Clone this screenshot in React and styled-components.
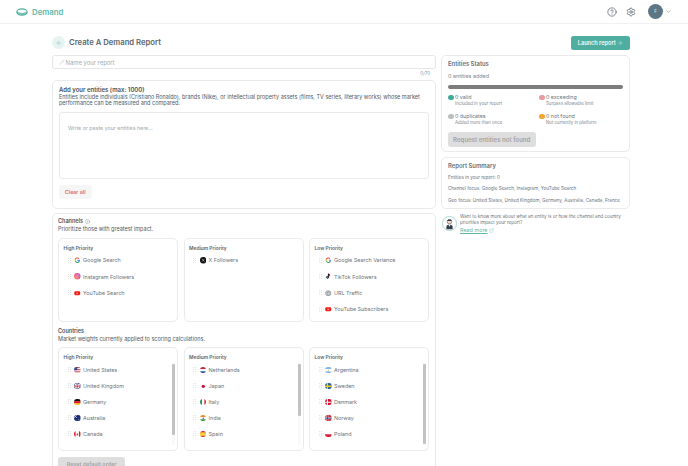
import React from "react";
import styled, { createGlobalStyle } from "styled-components";
import { ArrowLeft, ArrowRight, ChevronDown, CircleHelp, ExternalLink, Pencil, Settings, Info } from "lucide-react";

const palette = {
  text: "#4a5560",
  heading: "#5b6770",
  muted: "#8d959c",
  line: "#e8eaeb",
  teal: "#4fae9f",
  tealText: "#5db8aa",
  tealSoft: "#e6f3f0",
};

const GlobalStyle = createGlobalStyle`
  html, body { margin: 0; padding: 0; height: 100%; overflow: hidden; background: #fff; }
  body { font-family: Inter, "Liberation Sans", sans-serif; color: ${palette.text}; }
  * { box-sizing: border-box; }
`;

const GoogleIcon = ({ muted }) => (
  <IconSvg viewBox="0 0 24 24">
    <path fill="#4285F4" d="M22 12.2c0-.7-.1-1.4-.2-2H12v3.9h5.6a4.8 4.8 0 0 1-2.1 3.1v2.6h3.4c2-1.8 3.1-4.5 3.1-7.6z" />
    <path fill="#34A853" d="M12 22.5c2.8 0 5.2-.9 6.9-2.5l-3.4-2.6c-.9.6-2.1 1-3.5 1-2.7 0-5-1.8-5.8-4.3H3.2v2.7a10.5 10.5 0 0 0 8.8 5.7z" />
    <path fill="#FBBC05" d="M6.2 14.1a6.3 6.3 0 0 1 0-4.2V7.2H3.2a10.5 10.5 0 0 0 0 9.6z" />
    <path fill="#EA4335" d="M12 5.7c1.5 0 2.9.5 4 1.5l3-3A10.5 10.5 0 0 0 3.2 7.2l3 2.7c.8-2.4 3.1-4.2 5.8-4.2z" />
    {muted && <circle cx="12" cy="12" r="3.6" fill="#fff" />}
  </IconSvg>
);

const InstagramIcon = () => (
  <IconSvg viewBox="0 0 24 24">
    <defs>
      <linearGradient id="ig" x1="0" y1="1" x2="1" y2="0">
        <stop offset="0" stopColor="#f9a03f" />
        <stop offset="0.5" stopColor="#e8508f" />
        <stop offset="1" stopColor="#b45bd0" />
      </linearGradient>
    </defs>
    <circle cx="12" cy="12" r="12" fill="url(#ig)" />
    <rect x="6" y="6" width="12" height="12" rx="3.5" fill="none" stroke="#fff" strokeOpacity=".6" strokeWidth="1.5" />
    <circle cx="12" cy="12" r="3" fill="none" stroke="#fff" strokeOpacity=".6" strokeWidth="1.5" />
  </IconSvg>
);

const YoutubeIcon = () => (
  <IconSvg viewBox="0 0 24 24">
    <rect x="1" y="5" width="22" height="14" rx="4" fill="#f01f17" />
    <path d="M10 9l5.5 3-5.5 3z" fill="#fff" />
  </IconSvg>
);

const XIcon = () => (
  <IconSvg viewBox="0 0 24 24">
    <circle cx="12" cy="12" r="12" fill="#111" />
    <path d="M7 6.5l10 11M17 6.5l-10 11" stroke="#fff" strokeWidth="1.7" />
  </IconSvg>
);

const TiktokIcon = () => (
  <IconSvg viewBox="0 0 24 24">
    <path d="M13 3v12.5a3.4 3.4 0 1 1-3.4-3.4M13 3c.4 3 2.4 5 5.5 5.2" fill="none" stroke="#25f4ee" strokeWidth="3.2" transform="translate(-1 .6)" />
    <path d="M13 3v12.5a3.4 3.4 0 1 1-3.4-3.4M13 3c.4 3 2.4 5 5.5 5.2" fill="none" stroke="#fe2c55" strokeWidth="3.2" transform="translate(1 -.2)" />
    <path d="M13 3v12.5a3.4 3.4 0 1 1-3.4-3.4M13 3c.4 3 2.4 5 5.5 5.2" fill="none" stroke="#111" strokeWidth="3" />
  </IconSvg>
);

const GlobeIcon = () => (
  <IconSvg viewBox="0 0 24 24">
    <circle cx="12" cy="12" r="9.5" fill="none" stroke="#7c8589" strokeWidth="2.6" />
    <path d="M3 9h18M3 15h18M12 3c-5 5-5 13 0 18M12 3c5 5 5 13 0 18" fill="none" stroke="#7c8589" strokeWidth="2" />
  </IconSvg>
);

const stripes = (colors, vertical) =>
  colors.map((c, i) =>
    vertical ? (
      <rect key={i} x={(i * 24) / colors.length} y="0" width={24 / colors.length} height="24" fill={c} />
    ) : (
      <rect key={i} x="0" y={(i * 24) / colors.length} width="24" height={24 / colors.length} fill={c} />
    )
  );

const flags = {
  us: (
    <>
      {stripes(["#c9404f", "#f3dfe1", "#c9404f", "#f3dfe1", "#c9404f", "#f3dfe1"])}
      <rect width="12" height="12" fill="#3c4a8a" />
    </>
  ),
  uk: (
    <>
      <rect width="24" height="24" fill="#2b3f87" />
      <path d="M0 0l24 24M24 0L0 24" stroke="#fff" strokeWidth="4" />
      <path d="M12 0v24M0 12h24" stroke="#fff" strokeWidth="6" />
      <path d="M12 0v24M0 12h24" stroke="#d0263a" strokeWidth="3" />
    </>
  ),
  de: stripes(["#111", "#d8121f", "#f7b90e"]),
  au: (
    <>
      <rect width="24" height="24" fill="#1c2f78" />
      <path d="M0 0l11 11M11 0L0 11" stroke="#e6e6ee" strokeWidth="2.5" />
      <circle cx="17" cy="16" r="1.6" fill="#fff" />
    </>
  ),
  ca: (
    <>
      <rect width="24" height="24" fill="#fff" />
      <rect width="6" height="24" fill="#e0222f" />
      <rect x="18" width="6" height="24" fill="#e0222f" />
      <path d="M12 7l3 6-1 .5V17h-4v-3.5L9 13z" fill="#e0222f" />
    </>
  ),
  nl: stripes(["#c8283a", "#fff", "#24408e"]),
  jp: (
    <>
      <rect width="24" height="24" fill="#fff" />
      <circle cx="12" cy="12" r="6" fill="#d01030" />
    </>
  ),
  it: stripes(["#1f9a55", "#fff", "#d9303c"], true),
  in: (
    <>
      {stripes(["#f28a30", "#fff", "#1f8a3f"])}
      <circle cx="12" cy="12" r="2.5" fill="#2b3f87" />
    </>
  ),
  es: stripes(["#d9262e", "#fbc31c", "#fbc31c", "#d9262e"]),
  ar: (
    <>
      {stripes(["#7db8e8", "#fff", "#7db8e8"])}
      <circle cx="12" cy="12" r="2.5" fill="#f6c343" />
    </>
  ),
  se: (
    <>
      <rect width="24" height="24" fill="#1b5fa8" />
      <path d="M9 0v24M0 12h24" stroke="#fccb16" strokeWidth="5" />
    </>
  ),
  dk: (
    <>
      <rect width="24" height="24" fill="#d3122e" />
      <path d="M9 0v24M0 12h24" stroke="#fff" strokeWidth="4" />
    </>
  ),
  no: (
    <>
      <rect width="24" height="24" fill="#c8283a" />
      <path d="M9 0v24M0 12h24" stroke="#fff" strokeWidth="6" />
      <path d="M9 0v24M0 12h24" stroke="#24408e" strokeWidth="3" />
    </>
  ),
  pl: stripes(["#fff", "#dc1c3a"]),
};

const Flag = ({ code }) => <FlagSvg viewBox="0 0 24 24">{flags[code]}</FlagSvg>;

const channelGroups = [
  {
    title: "High Priority",
    items: [
      { name: "Google Search", icon: <GoogleIcon /> },
      { name: "Instagram Followers", icon: <InstagramIcon /> },
      { name: "YouTube Search", icon: <YoutubeIcon /> },
    ],
  },
  { title: "Medium Priority", items: [{ name: "X Followers", icon: <XIcon /> }] },
  {
    title: "Low Priority",
    items: [
      { name: "Google Search Variance", icon: <GoogleIcon muted /> },
      { name: "TikTok Followers", icon: <TiktokIcon /> },
      { name: "URL Traffic", icon: <GlobeIcon /> },
      { name: "YouTube Subscribers", icon: <YoutubeIcon /> },
    ],
  },
];

const countryGroups = [
  {
    title: "High Priority",
    thumb: 71,
    items: [
      ["United States", "us"],
      ["United Kingdom", "uk"],
      ["Germany", "de"],
      ["Australia", "au"],
      ["Canada", "ca"],
    ],
  },
  {
    title: "Medium Priority",
    thumb: 52,
    items: [
      ["Netherlands", "nl"],
      ["Japan", "jp"],
      ["Italy", "it"],
      ["India", "in"],
      ["Spain", "es"],
    ],
  },
  {
    title: "Low Priority",
    thumb: 80,
    items: [
      ["Argentina", "ar"],
      ["Sweden", "se"],
      ["Denmark", "dk"],
      ["Norway", "no"],
      ["Poland", "pl"],
    ],
  },
];

const statuses = [
  { color: "#45aa9b", label: "0 valid", note: "Included in your report" },
  { color: "#e79aa0", label: "0 exceeding", note: "Surpass allowable limit" },
  { color: "#bdbdbd", label: "0 duplicates", note: "Added more than once" },
  { color: "#f3a52f", label: "0 not found", note: "Not currently in platform" },
];

const Grip = () => (
  <GripSvg viewBox="0 0 4 6">
    {[0.6, 3].map((x) => [0.6, 3, 5.4].map((y) => <circle key={`${x}-${y}`} cx={x} cy={y} r="0.55" />))}
  </GripSvg>
);

export default function App() {
  return (
    <>
      <GlobalStyle />
      <Page>
        <TopBar>
          <Brand>
            <LogoMark viewBox="0 0 24 16">
              <ellipse cx="12" cy="8" rx="11.5" ry="7.5" fill="#4fae9f" />
              <ellipse cx="12" cy="6.5" rx="9" ry="3.4" fill="#fff" />
              <path d="M5 11c4 1.5 10 1.5 14 0" stroke="#bfe3dc" strokeWidth="1.2" fill="none" />
            </LogoMark>
            <BrandName>Demand</BrandName>
          </Brand>
          <TopActions>
            <TopIcon><CircleHelp size={10} strokeWidth={1.6} /></TopIcon>
            <TopIcon><Settings size={10} strokeWidth={1.6} /></TopIcon>
            <UserMenu>
              <Avatar>F</Avatar>
              <ChevronDown size={7} strokeWidth={1.5} />
            </UserMenu>
          </TopActions>
        </TopBar>

        <Content>
          <TitleRow>
            <TitleLeft>
              <BackButton><ArrowLeft size={6} strokeWidth={1.5} /></BackButton>
              <PageTitle>Create A Demand Report</PageTitle>
            </TitleLeft>
            <LaunchButton>
              Launch report <ArrowRight size={6} strokeWidth={1.5} />
            </LaunchButton>
          </TitleRow>

          <Columns>
            <MainColumn>
              <NameInput>
                <Pencil size={5} strokeWidth={1.2} />
                <span>Name your report</span>
              </NameInput>
              <Counter>0/70</Counter>

              <Card>
                <CardTitle>Add your entities (max: 1000)</CardTitle>
                <BodyText>
                  Entities include individuals (Cristiano Ronaldo), brands (Nike), or intellectual property assets (films, TV series, literary works) whose market performance can be measured and compared.
                </BodyText>
                <TextBox>Write or paste your entities here...</TextBox>
                <ClearButton>Clear all</ClearButton>
              </Card>

              <ChannelCard>
                <SectionTitle>Channels <Info size={5} strokeWidth={1.3} /></SectionTitle>
                <BodyText>Prioritize those with greatest impact.</BodyText>
                <BoxGrid>
                  {channelGroups.map((group) => (
                    <Box key={group.title} $height="84px">
                      <BoxTitle>{group.title}</BoxTitle>
                      <List>
                        {group.items.map((item) => (
                          <Row key={item.name} $tall>
                            <Grip />
                            {item.icon}
                            <span>{item.name}</span>
                          </Row>
                        ))}
                      </List>
                    </Box>
                  ))}
                </BoxGrid>

                <CountrySection>
                  <SectionTitle>Countries</SectionTitle>
                  <BodyText>Market weights currently applied to scoring calculations.</BodyText>
                </CountrySection>
                <BoxGrid>
                  {countryGroups.map((group) => (
                    <Box key={group.title} $height="104px">
                      <BoxTitle>{group.title}</BoxTitle>
                      <List>
                        {group.items.map(([name, code]) => (
                          <Row key={name}>
                            <Grip />
                            <Flag code={code} />
                            <span>{name}</span>
                          </Row>
                        ))}
                      </List>
                      <ScrollTrack>
                        <ScrollThumb style={{ height: group.thumb }} />
                      </ScrollTrack>
                    </Box>
                  ))}
                </BoxGrid>
                <ResetButton>Reset default order</ResetButton>
              </ChannelCard>
            </MainColumn>

            <SideColumn>
              <StatusCard>
                <SideTitle>Entities Status</SideTitle>
                <SmallLine>0 entities added</SmallLine>
                <ProgressBar />
                <StatusGrid>
                  {statuses.map((s) => (
                    <StatusItem key={s.label}>
                      <Dot $color={s.color} />
                      <div>
                        <StatusLabel>{s.label}</StatusLabel>
                        <StatusNote>{s.note}</StatusNote>
                      </div>
                    </StatusItem>
                  ))}
                </StatusGrid>
                <RequestButton>Request entities not found</RequestButton>
              </StatusCard>

              <SummaryCard>
                <SideTitle>Report Summary</SideTitle>
                <SummaryLine>Entities in your report: 0</SummaryLine>
                <SummaryLine>Channel focus: Google Search, Instagram, YouTube Search</SummaryLine>
                <SummaryLine>Geo focus: United States, United Kingdom, Germany, Australia, Canada, France</SummaryLine>
              </SummaryCard>

              <HelpRow>
                <HelpAvatar>
                  <svg viewBox="0 0 24 24" width="15" height="15">
                    <circle cx="12" cy="12" r="11.3" fill="#fff" stroke="#7fc6b9" />
                    <circle cx="12" cy="9" r="3.6" fill="#f2d8c8" stroke="#33414a" strokeWidth=".8" />
                    <path d="M8.5 8c.5-3 6.5-3 7 0z" fill="#33414a" />
                    <path d="M7 21v-4c0-2 2-3 5-3s5 1 5 3v4z" fill="#33414a" />
                    <path d="M10.5 14l1.5 3 1.5-3z" fill="#fff" />
                  </svg>
                </HelpAvatar>
                <div>
                  <HelpText>Want to know more about what an entity is or how the channel and country priorities impact your report?</HelpText>
                  <ReadMore>
                    <u>Read more</u> <ExternalLink size={5} strokeWidth={1.3} />
                  </ReadMore>
                </div>
              </HelpRow>
            </SideColumn>
          </Columns>
        </Content>
      </Page>
    </>
  );
}

const Page = styled.div`
  height: 466px;
  overflow: hidden;
`;

const TopBar = styled.header`
  height: 24px;
  padding: 0 16.5px 0 16px;
  display: flex;
  align-items: center;
  justify-content: space-between;
  border-bottom: 1px solid #f0f1f2;
`;

const Brand = styled.div`
  display: flex;
  align-items: center;
  gap: 4px;
`;

const LogoMark = styled.svg`
  width: 12px;
  height: 8px;
`;

const BrandName = styled.span`
  font-size: 7.8px;
  font-weight: 600;
  color: ${palette.tealText};
`;

const TopActions = styled.div`
  display: flex;
  align-items: center;
  gap: 9px;
`;

const TopIcon = styled.span`
  display: flex;
  color: #46525a;
`;

const UserMenu = styled.div`
  display: flex;
  align-items: center;
  gap: 1.5px;
  margin-left: 3px;
  color: #5c666e;
`;

const Avatar = styled.div`
  width: 15px;
  height: 15px;
  border-radius: 50%;
  background: #5d7684;
  color: #dfe6ea;
  font-size: 4.5px;
  display: flex;
  align-items: center;
  justify-content: center;
`;

const Content = styled.main`
  padding: 11px 58px 0 52px;
`;

const TitleRow = styled.div`
  height: 15px;
  display: flex;
  align-items: center;
  justify-content: space-between;
  margin-bottom: 5px;
`;

const TitleLeft = styled.div`
  display: flex;
  align-items: center;
  gap: 4px;
`;

const BackButton = styled.span`
  width: 13px;
  height: 13px;
  border-radius: 50%;
  background: ${palette.tealSoft};
  color: ${palette.tealText};
  display: flex;
  align-items: center;
  justify-content: center;
`;

const PageTitle = styled.h1`
  margin: 0;
  font-size: 7.7px;
  font-weight: 600;
  color: ${palette.heading};
`;

const LaunchButton = styled.button`
  width: 59px;
  height: 14px;
  padding: 0;
  border: 0;
  border-radius: 2.5px;
  background: ${palette.teal};
  color: #f4fbfa;
  font: 600 5.6px Inter, sans-serif;
  display: flex;
  align-items: center;
  justify-content: center;
  gap: 1.5px;
`;

const Columns = styled.div`
  display: grid;
  grid-template-columns: 384px 189px;
  gap: 5px;
  align-items: start;
`;

const MainColumn = styled.div`
  display: flex;
  flex-direction: column;
`;

const NameInput = styled.div`
  height: 14px;
  padding: 0 6px;
  display: flex;
  align-items: center;
  gap: 1.5px;
  border: 1px solid #e4e6e7;
  border-radius: 3px;
  color: #a4a9ad;
  font-size: 5.9px;
`;

const Counter = styled.div`
  height: 11px;
  padding: 2px 6px 0 0;
  text-align: right;
  font-size: 4.5px;
  color: #8d959c;
`;

const Card = styled.section`
  height: 128.5px;
  padding: 4.5px 6px;
  border: 1px solid ${palette.line};
  border-radius: 5px;
  margin-bottom: 4.5px;
`;

const CardTitle = styled.h2`
  margin: 0 0 1px;
  font-size: 6px;
  font-weight: 600;
  color: #48535b;
`;

const BodyText = styled.p`
  margin: 0;
  font-size: 5.5px;
  line-height: 6.7px;
  color: #4f5a62;
`;

const TextBox = styled.div`
  height: 66.5px;
  margin-top: 5.5px;
  padding: 12px 8px;
  border: 1px solid ${palette.line};
  border-radius: 3px;
  font-size: 5.3px;
  color: #a3a8ac;
`;

const ClearButton = styled.button`
  display: block;
  width: 32.5px;
  height: 14px;
  margin-top: 6px;
  padding: 0;
  border: 0;
  border-radius: 3px;
  background: #f6f6f6;
  color: #de6a70;
  font: 600 5.3px Inter, sans-serif;
`;

const ChannelCard = styled.section`
  padding: 4px 6px 0 5px;
  border: 1px solid ${palette.line};
  border-radius: 5px;
  height: 290px;
`;

const SectionTitle = styled.h3`
  margin: 0 0 1px;
  display: flex;
  align-items: center;
  gap: 2px;
  font-size: 5.5px;
  line-height: 7px;
  font-weight: 600;
  color: #48535b;
`;

const BoxGrid = styled.div`
  display: grid;
  grid-template-columns: repeat(3, 1fr);
  gap: 5.5px;
  margin-top: 5px;
`;

const CountrySection = styled.div`
  margin-top: 6px;
`;

const Box = styled.div`
  position: relative;
  height: ${(p) => p.$height};
  padding: 6px 0 0 4.5px;
  border: 1px solid ${palette.line};
  border-radius: 5px;
`;

const BoxTitle = styled.div`
  font-size: 4.9px;
  font-weight: 600;
  color: #5b656d;
  line-height: 7px;
  margin-bottom: 0.5px;
`;

const List = styled.div`
  padding-left: 4px;
`;

const ScrollTrack = styled.div`
  position: absolute;
  top: 14px;
  right: 2px;
  bottom: 5px;
  width: 3px;
  padding-top: 1.5px;
  background: #f8f9f9;
`;

const ScrollThumb = styled.div`
  background: #c2c2c2;
  border-radius: 1px;
`;

const Row = styled.div`
  height: ${(p) => (p.$tall ? "16.3px" : "16px")};
  display: flex;
  align-items: center;
  gap: 2.5px;
  font-size: 5.4px;
  color: #6a747b;
  white-space: nowrap;
`;

const GripSvg = styled.svg`
  width: 3.5px;
  height: 5px;
  flex: none;
  margin-right: 0.5px;
  fill: #c8cbcd;
`;

const IconSvg = styled.svg`
  width: 6.5px;
  height: 6.5px;
  flex: none;
`;

const FlagSvg = styled.svg`
  width: 6.5px;
  height: 6.5px;
  flex: none;
  border-radius: 50%;
`;

const ResetButton = styled.button`
  display: block;
  width: 67px;
  height: 14px;
  margin-top: 5.5px;
  padding: 0;
  border: 0;
  border-radius: 3px;
  background: #dedede;
  color: #a5a5a5;
  font: 600 5.4px Inter, sans-serif;
`;

const SideColumn = styled.aside`
  display: flex;
  flex-direction: column;
`;

const SideCard = styled.section`
  border: 1px solid ${palette.line};
  border-radius: 5px;
  padding: 3.5px 6px;
`;

const StatusCard = styled(SideCard)`
  height: 96.5px;
  margin-bottom: 5.5px;
`;

const SummaryCard = styled(SideCard)`
  height: 51.5px;
  margin-bottom: 5.5px;
`;

const SideTitle = styled.h2`
  margin: 0;
  font-size: 5.9px;
  line-height: 8px;
  font-weight: 600;
  color: #66727a;
`;

const SmallLine = styled.div`
  margin-top: 5px;
  font-size: 5.4px;
  line-height: 7px;
  color: #7b848a;
`;

const ProgressBar = styled.div`
  height: 3.5px;
  margin-top: 5.7px;
  border-radius: 2px;
  background: #7d7d7d;
`;

const StatusGrid = styled.div`
  margin-top: 5.5px;
  display: grid;
  grid-template-columns: 91px 1fr;
  row-gap: 6px;
`;

const StatusItem = styled.div`
  display: flex;
  gap: 1.5px;
`;

const Dot = styled.span`
  width: 5.5px;
  height: 5.5px;
  margin-top: 0.5px;
  border-radius: 50%;
  flex: none;
  background: ${(p) => p.$color};
`;

const StatusLabel = styled.div`
  font-size: 5.3px;
  line-height: 7px;
  color: #6a747b;
`;

const StatusNote = styled.div`
  font-size: 4.4px;
  line-height: 6px;
  color: #81898f;
`;

const RequestButton = styled.button`
  display: block;
  width: 87.5px;
  height: 15px;
  margin-top: 5.8px;
  padding: 0;
  border: 0;
  border-radius: 3px;
  background: #dedede;
  color: #a3a3a3;
  font: 600 6.1px Inter, sans-serif;
`;

const SummaryLine = styled.div`
  margin-top: 5px;
  font-size: 4.6px;
  line-height: 6.5px;
  color: #6a747b;
  white-space: nowrap;
`;

const HelpRow = styled.div`
  display: flex;
  align-items: center;
  gap: 3px;
  padding-left: 1px;
`;

const HelpAvatar = styled.span`
  display: flex;
  flex: none;
`;

const HelpText = styled.div`
  font-size: 4.55px;
  line-height: 5.8px;
  color: #6a747b;
`;

const ReadMore = styled.a`
  display: flex;
  align-items: center;
  gap: 2px;
  margin-top: 1px;
  font-size: 5.4px;
  line-height: 7px;
  color: ${palette.tealText};
`;
